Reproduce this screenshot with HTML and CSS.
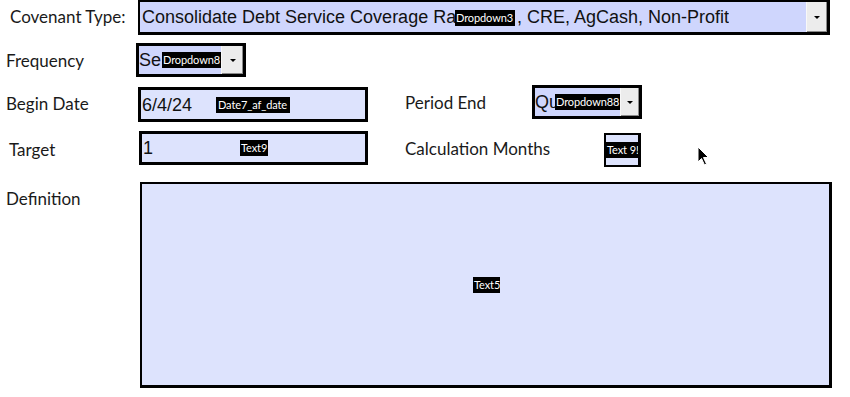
FILE: index.html
```html
<!DOCTYPE html>
<html>
<head>
<meta charset="utf-8">
<link rel="stylesheet" href="styles.css">
</head>
<body>
<div class="form">
  <div class="row r1">
    <div class="label l-cov">Covenant Type:</div>
    <div class="field dd cov">
      <span class="val">Consolidate Debt Service Coverage Ra</span><span class="tag">Dropdown3</span><span class="val rest">, CRE, AgCash, Non-Profit</span>
      <span class="btn"><i class="arr"></i></span>
    </div>
  </div>
  <div class="row r2">
    <div class="label l-freq">Frequency</div>
    <div class="field dd freq">
      <span class="val">Se</span><span class="tag">Dropdown8</span><span class="val tail">u</span>
      <span class="btn"><i class="arr"></i></span>
    </div>
  </div>
  <div class="row r3">
    <div class="label l-begin">Begin Date</div>
    <div class="field lite begin">
      <span class="val">6/4/24</span><span class="tag">Date7_af_date</span>
    </div>
    <div class="label l-period">Period End</div>
    <div class="field dd period">
      <span class="val">Qu</span><span class="tag">Dropdown88</span>
      <span class="btn"><i class="arr"></i></span>
    </div>
  </div>
  <div class="row r4">
    <div class="label l-target">Target</div>
    <div class="field lite target">
      <span class="val">1</span><span class="tag">Text9</span>
    </div>
    <div class="label l-calc">Calculation Months</div>
    <div class="field lite calc">
      <span class="tag">Text 9!</span>
    </div>
    <svg class="cursor" width="13" height="20" viewBox="0 0 13 20"><path d="M1 1 L1 16 L4.5 12.5 L7.5 19 L9.5 18 L6.5 11.5 L11.5 11.5 Z" fill="#000" stroke="#fff" stroke-width="1"/></svg>
  </div>
  <div class="row r5">
    <div class="label l-def">Definition</div>
    <div class="field lite def">
      <span class="tag">Text5</span>
    </div>
  </div>
</div>
</body>
</html>
```
FILE: styles.css
```css
html, body {
  margin: 0;
  padding: 0;
  background: #fff;
}
.form {
  width: 850px;
  height: 397px;
  position: relative;
  font-family: "Lato", "Open Sans", sans-serif;
}
.row {
  display: flex;
  align-items: flex-start;
}
.label {
  font-size: 17px;
  color: #1a1a1a;
  flex: none;
}
.field {
  position: relative;
  box-sizing: border-box;
  border: 3px solid #000;
  flex: none;
  display: flex;
  align-items: center;
  font-family: "Liberation Sans", Arial, sans-serif;
  font-size: 18px;
  color: #111;
  overflow: hidden;
  white-space: nowrap;
}
.dd { background: #cfd6fd; }
.lite { background: #dde3fd; }
.val {
  flex: none;
  display: block;
  overflow: hidden;
  line-height: 24px;
}
.btn {
  position: absolute;
  top: 0;
  right: 0;
  bottom: 0;
  width: 20px;
  background: #ececec;
  border-left: 1px solid #f8f8f8;
  box-shadow: inset -1px -1px 0 #8a8a8a;
  display: flex;
  align-items: center;
  justify-content: center;
}
.arr {
  display: block;
  width: 0;
  height: 0;
  border-left: 3px solid transparent;
  border-right: 3px solid transparent;
  border-top: 3px solid #000;
}
.tag {
  flex: none;
  display: block;
  box-sizing: border-box;
  background: #000;
  color: #fff;
  font-family: "Lato", "Open Sans", sans-serif;
  font-size: 11px;
  line-height: 16px;
  height: 16px;
  text-align: left;
  overflow: hidden;
  padding-left: 1px;
  letter-spacing: -0.1px;
}

/* row 1 */
.r1 { height: 36px; }
.l-cov { width: 128px; margin-left: 10px; margin-top: 6px; }
.cov { width: 692px; height: 35px; border-width: 2px 3px 3px 2px; }
.cov .val { width: 313px; padding-left: 2px; }
.cov .tag { width: 60px; margin-top: 2px; }
.cov .rest { width: auto; padding-left: 2px; }

/* row 2 */
.r2 { margin-top: 7px; height: 42px; }
.l-freq { width: 130px; margin-left: 6px; margin-top: 7px; }
.freq { width: 110px; height: 34px; }
.freq .val { width: 23px; }
.freq .tag { width: 59px; }
.freq .tail { width: 3px; }
.freq .btn { width: 21px; }

/* row 3 */
.r3 { height: 46px; }
.l-begin { width: 132px; margin-left: 6px; margin-top: 8px; }
.begin { width: 230px; height: 35px; margin-top: 2px; }
.begin .val { width: 74px; padding-left: 1px; }
.begin .tag { width: 74px; padding-left: 2px; }
.l-period { width: 127px; margin-left: 37px; margin-top: 7px; }
.period { width: 110px; height: 34px; }
.period .val { width: 20px; }
.period .tag { width: 65px; }
.period .btn { width: 18px; }

/* row 4 */
.r4 { height: 51px; position: relative; }
.l-target { width: 130px; margin-left: 9px; margin-top: 8px; }
.target { width: 229px; height: 34px; }
.target .val { width: 97px; padding-left: 1px; }
.target .tag { width: 28px; }
.l-calc { width: 199px; margin-left: 37px; margin-top: 7px; }
.calc { width: 37px; height: 34px; margin-top: 2px; border-width: 2px 3px 2px 2px; }
.calc .tag { width: 34px; padding-left: 1px; }
.cursor { position: absolute; left: 697px; top: 15px; }

/* row 5 */
.l-def { width: 134px; margin-left: 6px; margin-top: 6px; }
.def { width: 692px; height: 206px; border-width: 2px 3px 3px 2px; justify-content: center; }
.def .tag { width: 27px; margin-left: 2px; }
```
